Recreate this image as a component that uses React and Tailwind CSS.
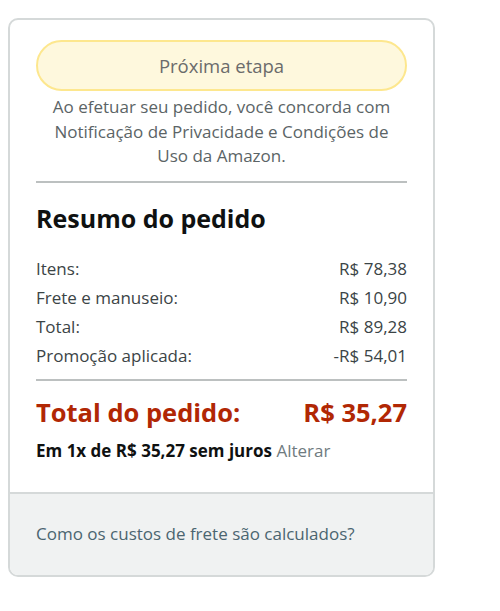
export default function App() {
  const rows = [
    ['Itens:', 'R$ 78,38'],
    ['Frete e manuseio:', 'R$ 10,90'],
    ['Total:', 'R$ 89,28'],
    ['Promoção aplicada:', '-R$ 54,01'],
  ];

  return (
    <div className="w-[500px] h-[611px] bg-white pt-[18px] pl-[8px]" style={{ fontFamily: '"Open Sans", Arial, sans-serif' }}>
      <div className="w-[427px] border-2 border-[#d5d9d9] rounded-[10px] overflow-hidden">
        {/* Top section */}
        <div className="px-[26px] pt-[20px] pb-[31px]">
          <button className="w-full h-[51px] rounded-full bg-[#fef8dd] border-2 border-[#fde78e] text-[18.5px] text-[#6b6b6b]">
            Próxima etapa
          </button>
          <p className="mt-[4px] text-center text-[17px] leading-[24.5px] text-[#5b6466] whitespace-nowrap">
            Ao efetuar seu pedido, você concorda com<br />
            Notificação de Privacidade e Condições de<br />
            Uso da Amazon.
          </p>
          <div className="mt-[12px] h-[2px] bg-[#bcc0c0]" />

          <h2 className="mt-[20px] text-[25px] font-bold text-[#0f1111] leading-[30px]">Resumo do pedido</h2>

          <div className="mt-[25px] flex flex-col gap-[7px]">
            {rows.map(([label, value]) => (
              <div key={label} className="flex justify-between text-[17px] leading-[22px] text-[#3b4446]">
                <span>{label}</span>
                <span>{value}</span>
              </div>
            ))}
          </div>
          <div className="mt-[12px] h-[2px] bg-[#bcc0c0]" />

          <div className="mt-[16px] flex justify-between text-[25.5px] font-bold text-[#b12704] leading-[30px]">
            <span>Total do pedido:</span>
            <span>R$ 35,27</span>
          </div>
          <p className="mt-[14px] text-[17px] leading-[20px] whitespace-nowrap">
            <span className="font-bold text-[#0f1111]">Em 1x de R$ 35,27 sem juros</span>{' '}
            <span className="text-[#6f7b80]">Alterar</span>
          </p>
        </div>

        {/* Footer */}
        <div className="bg-[#f0f2f2] border-t-2 border-[#d5d9d9] px-[26px] h-[83px] flex items-center">
          <span className="text-[17px] text-[#4b6570]">Como os custos de frete são calculados?</span>
        </div>
      </div>
    </div>
  );
}
